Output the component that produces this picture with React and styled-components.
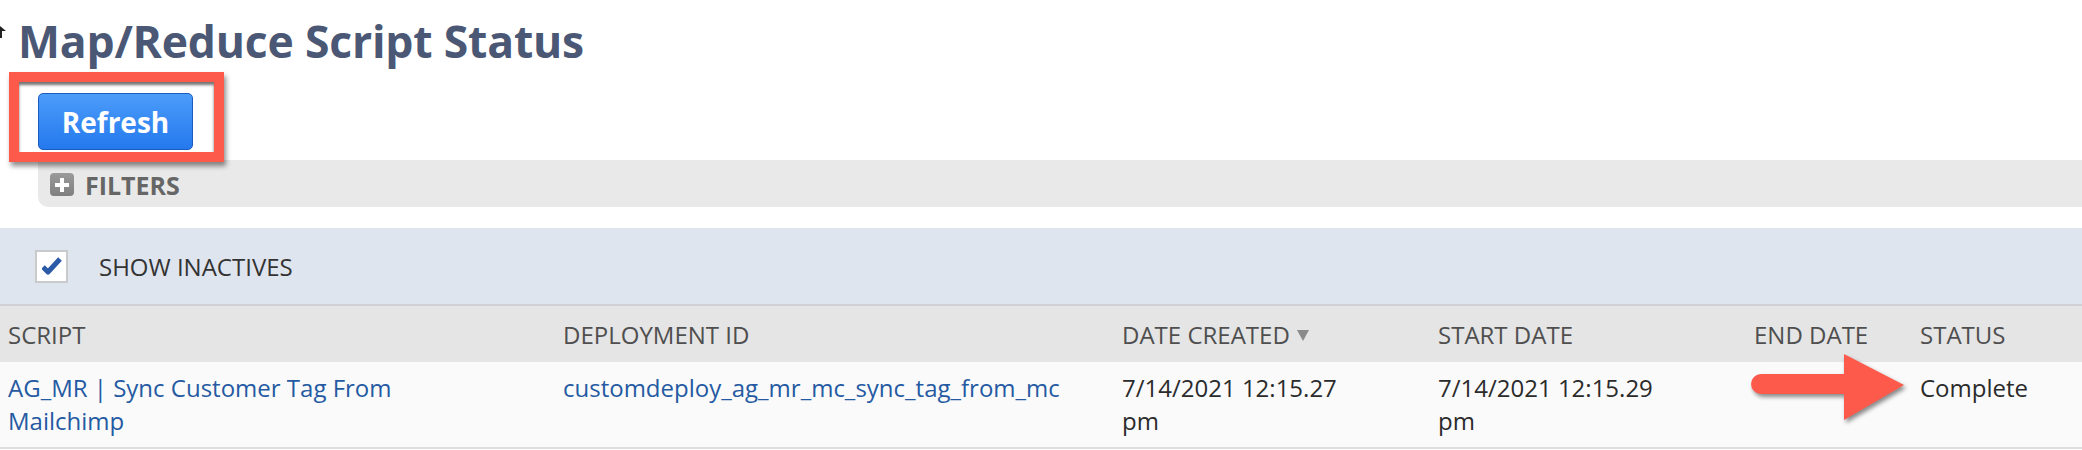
import React from 'react';
import styled, { createGlobalStyle } from 'styled-components';

const GlobalStyle = createGlobalStyle`
  body {
    margin: 0;
    background: #ffffff;
    font-family: "Open Sans", "Liberation Sans", sans-serif;
  }
`;

const Page = styled.div`
  position: relative;
  padding-top: 15px;
  width: 2082px;
  overflow: hidden;
`;

const Corner = styled.svg`
  position: absolute;
  left: 0;
  top: 24px;
`;

const Title = styled.h1`
  margin: 0;
  padding-left: 18px;
  height: 51px;
  font-size: 44.5px;
  line-height: 51px;
  font-weight: 700;
  color: #4b5875;
  letter-spacing: -0.2px;
`;

const Highlight = styled.div`
  position: relative;
  z-index: 2;
  display: inline-flex;
  margin: 6px 0 0 9px;
  padding: 11px 21px 2px 19px;
  border: 10px solid #fd5a4b;
  background: #ffffff;
  box-shadow: 2px 4px 5px rgba(0, 0, 0, 0.45), inset 0 3px 3px rgba(0, 0, 0, 0.55);
`;

const Button = styled.button`
  width: 155px;
  height: 57px;
  border: 1px solid #1b5bbd;
  border-radius: 5px;
  background: linear-gradient(#4c9cf9, #2479ee);
  color: #ffffff;
  font-family: "Open Sans", sans-serif;
  font-size: 28px;
  font-weight: 700;
  padding: 0;
  cursor: pointer;
`;

const FilterBar = styled.div`
  position: relative;
  z-index: 1;
  display: flex;
  align-items: center;
  gap: 11px;
  margin: -2px 0 0 38px;
  height: 47px;
  padding: 2px 0 0 12px;
  box-sizing: border-box;
  background: #e9e9e9;
  border-bottom-left-radius: 10px;
`;

const PlusBox = styled.span`
  display: inline-flex;
  align-items: center;
  justify-content: center;
  width: 24px;
  height: 23px;
  border-radius: 4px;
  background: linear-gradient(#9a9a9a, #7f7f7f);
`;

const FilterLabel = styled.span`
  font-size: 25px;
  font-weight: 700;
  color: #666666;
`;

const Band = styled.div`
  display: flex;
  align-items: center;
  gap: 31px;
  margin-top: 21px;
  height: 78px;
  padding: 0 0 0 35px;
  box-sizing: border-box;
  background: #dfe5ef;
  border-bottom: 2px solid #cfd1d4;
`;

const CheckBox = styled.span`
  display: inline-flex;
  align-items: center;
  justify-content: center;
  width: 33px;
  height: 33px;
  box-sizing: border-box;
  border: 2px solid #c9cacc;
  background: #ffffff;
`;

const BandLabel = styled.span`
  font-size: 24px;
  color: #333333;
`;

const Row = styled.div`
  position: relative;
  display: grid;
  grid-template-columns: 555px 559px 316px 316px 166px 1fr;
  align-items: ${p => (p.$head ? 'center' : 'start')};
  height: ${p => (p.$head ? '56px' : 'auto')};
  padding: ${p => (p.$head ? '0' : '9px 0 10px')};
  background: ${p => (p.$head ? '#e5e5e5' : '#fafafa')};
  border-bottom: ${p => (p.$head ? 'none' : '2px solid #dedede')};
  font-size: 24px;
  line-height: 33px;
`;

const HeadCell = styled.div`
  padding-left: 8px;
  color: #4f4f4f;
  display: flex;
  align-items: center;
  gap: 7px;
`;

const Cell = styled.div`
  padding-left: 8px;
  max-width: ${p => p.$max || 'none'};
  color: ${p => (p.$link ? '#255aa3' : '#2b2b2b')};
`;

const SortMark = styled.svg`
  margin-top: 2px;
`;

const Arrow = styled.svg`
  position: absolute;
  left: 1748px;
  top: -8px;
  filter: drop-shadow(2px 3px 2px rgba(0, 0, 0, 0.45));
`;

function App() {
  return (
    <Page>
      <GlobalStyle />
      <Corner width="8" height="16" viewBox="0 0 8 16">
        <path d="M0 2 L6 7 L2 7 L2 14 L0 14 Z" fill="#222" />
      </Corner>
      <Title>Map/Reduce Script Status</Title>

      <Highlight>
        <Button>Refresh</Button>
      </Highlight>

      <FilterBar>
        <PlusBox>
          <svg width="14" height="14" viewBox="0 0 14 14">
            <path d="M5 0h4v5h5v4H9v5H5V9H0V5h5z" fill="#ffffff" />
          </svg>
        </PlusBox>
        <FilterLabel>FILTERS</FilterLabel>
      </FilterBar>

      <Band>
        <CheckBox>
          <svg width="20" height="18" viewBox="0 0 20 18">
            <path d="M1 10 L6 15 L18 2" fill="none" stroke="#2b5aa6" strokeWidth="5" strokeLinejoin="round" />
          </svg>
        </CheckBox>
        <BandLabel>SHOW INACTIVES</BandLabel>
      </Band>

      <Row $head>
        <HeadCell>SCRIPT</HeadCell>
        <HeadCell>DEPLOYMENT ID</HeadCell>
        <HeadCell>
          DATE CREATED
          <SortMark width="12" height="11" viewBox="0 0 12 11">
            <path d="M0 0h12L6 11z" fill="#8a8a8a" />
          </SortMark>
        </HeadCell>
        <HeadCell>START DATE</HeadCell>
        <HeadCell>END DATE</HeadCell>
        <HeadCell>STATUS</HeadCell>
      </Row>

      <Row>
        <Cell $link $max="420px">AG_MR | Sync Customer Tag From Mailchimp</Cell>
        <Cell $link>customdeploy_ag_mr_mc_sync_tag_from_mc</Cell>
        <Cell $max="250px">7/14/2021 12:15.27 pm</Cell>
        <Cell $max="250px">7/14/2021 12:15.29 pm</Cell>
        <Cell></Cell>
        <Cell>Complete</Cell>
        <Arrow width="164" height="74" viewBox="0 0 164 74">
          <path
            d="M13 20 H96 V0 L156 31 L96 66 V40 H13 A10 10 0 0 1 13 20 Z"
            fill="#fd5a4b"
          />
        </Arrow>
      </Row>
    </Page>
  );
}

export default App;
